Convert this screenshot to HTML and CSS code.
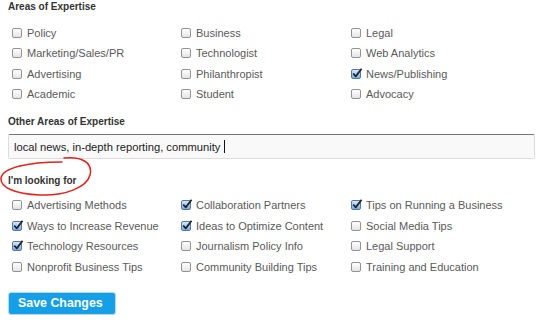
FILE: index.html
```html
<!DOCTYPE html>
<html>
<head>
<meta charset="utf-8">
<link rel="stylesheet" href="styles.css">
</head>
<body>
<div class="page">
  <div class="label label-first">Areas of Expertise</div>
  <div class="options options-first">
    <div class="opt"><span class="cb"></span>Policy</div>
    <div class="opt"><span class="cb"></span>Business</div>
    <div class="opt"><span class="cb"></span>Legal</div>
    <div class="opt"><span class="cb"></span>Marketing/Sales/PR</div>
    <div class="opt"><span class="cb"></span>Technologist</div>
    <div class="opt"><span class="cb"></span>Web Analytics</div>
    <div class="opt"><span class="cb"></span>Advertising</div>
    <div class="opt"><span class="cb"></span>Philanthropist</div>
    <div class="opt"><span class="cb on"><svg viewBox="0 0 10 10"><path d="M2 5 L4.3 7.6 L9.6 0.6" /></svg></span>News/Publishing</div>
    <div class="opt"><span class="cb"></span>Academic</div>
    <div class="opt"><span class="cb"></span>Student</div>
    <div class="opt"><span class="cb"></span>Advocacy</div>
  </div>

  <div class="label label-other">Other Areas of Expertise</div>
  <div class="field">local news, in-depth reporting, community<span class="caret"></span></div>

  <div class="label label-looking">I'm looking for
    <svg class="circle" viewBox="0 0 100 46" width="100" height="46"><path d="M64 4 C 82 2, 93 9, 90 21 C 87 33, 66 42, 40 41 C 14 40, 0 33, 1 24 C 3 14, 26 8, 62 8" /></svg>
  </div>
  <div class="options options-second">
    <div class="opt"><span class="cb"></span>Advertising Methods</div>
    <div class="opt"><span class="cb on"><svg viewBox="0 0 10 10"><path d="M2 5 L4.3 7.6 L9.6 0.6" /></svg></span>Collaboration Partners</div>
    <div class="opt"><span class="cb on"><svg viewBox="0 0 10 10"><path d="M2 5 L4.3 7.6 L9.6 0.6" /></svg></span>Tips on Running a Business</div>
    <div class="opt"><span class="cb on"><svg viewBox="0 0 10 10"><path d="M2 5 L4.3 7.6 L9.6 0.6" /></svg></span>Ways to Increase Revenue</div>
    <div class="opt"><span class="cb on"><svg viewBox="0 0 10 10"><path d="M2 5 L4.3 7.6 L9.6 0.6" /></svg></span>Ideas to Optimize Content</div>
    <div class="opt"><span class="cb"></span>Social Media Tips</div>
    <div class="opt"><span class="cb on"><svg viewBox="0 0 10 10"><path d="M2 5 L4.3 7.6 L9.6 0.6" /></svg></span>Technology Resources</div>
    <div class="opt"><span class="cb"></span>Journalism Policy Info</div>
    <div class="opt"><span class="cb"></span>Legal Support</div>
    <div class="opt"><span class="cb"></span>Nonprofit Business Tips</div>
    <div class="opt"><span class="cb"></span>Community Building Tips</div>
    <div class="opt"><span class="cb"></span>Training and Education</div>
  </div>

  <div class="btn">Save Changes</div>
</div>
</body>
</html>
```

FILE: styles.css
```css
html, body {
  margin: 0;
  padding: 0;
  background: #fff;
}
.page {
  width: 550px;
  height: 332px;
  overflow: hidden;
  font-family: "Liberation Sans", Arial, Helvetica, sans-serif;
  display: flex;
  flex-direction: column;
}
.label {
  font-size: 10px;
  font-weight: bold;
  color: #333;
  line-height: 14px;
  height: 14px;
  padding-left: 8px;
}
.label-first { margin-top: 0; }
.label-other { margin-top: 10.75px; }
.label-looking {
  margin-top: 15px;
  position: relative;
}
.circle {
  position: absolute;
  left: 0;
  top: -20px;
  overflow: visible;
}
.circle path {
  fill: none;
  stroke: #e0231c;
  stroke-width: 1.5;
  stroke-linecap: round;
}
.options {
  display: grid;
  grid-template-columns: 169px 170px 170px;
  padding-left: 12px;
}
.options-first { margin-top: 8.25px; }
.options-second { margin-top: 6.75px; }
.opt {
  height: 20.5px;
  display: flex;
  align-items: center;
  gap: 5px;
  font-size: 11px;
  color: #5a5a5a;
  white-space: nowrap;
}
.cb {
  flex: none;
  position: relative;
  width: 10px;
  height: 10px;
  box-sizing: border-box;
  border: 1px solid #939393;
  border-radius: 2px;
  background: linear-gradient(#ffffff, #e4e4e4);
}
.cb.on {
  border-color: #5a7799;
  background: linear-gradient(#d6e8fa, #76aee6);
}
.cb svg {
  position: absolute;
  left: -1px;
  top: -2px;
  width: 11px;
  height: 11px;
  overflow: visible;
}
.cb svg path {
  fill: none;
  stroke: #1d2430;
  stroke-width: 1.6;
  stroke-linejoin: round;
}
.field {
  margin-top: 5px;
  margin-left: 8px;
  width: 527px;
  height: 25px;
  box-sizing: border-box;
  border: 1px solid #dcdcdc;
  border-top-color: #777;
  border-radius: 2px;
  background: #f9f9f9;
  padding-left: 5px;
  display: flex;
  align-items: center;
  font-size: 11.2px;
  color: #222;
  white-space: nowrap;
}
.caret {
  display: inline-block;
  width: 1px;
  height: 13px;
  background: #111;
  margin-left: 4px;
}
.btn {
  margin-top: 15.25px;
  margin-left: 8px;
  width: 108px;
  height: 23px;
  box-sizing: border-box;
  border: 1px solid #b8d8ef;
  border-radius: 3px;
  background: #159fe7;
  color: #fff;
  font-weight: bold;
  font-size: 12.4px;
  line-height: 21px;
  padding-left: 9px;
  white-space: nowrap;
}
```
